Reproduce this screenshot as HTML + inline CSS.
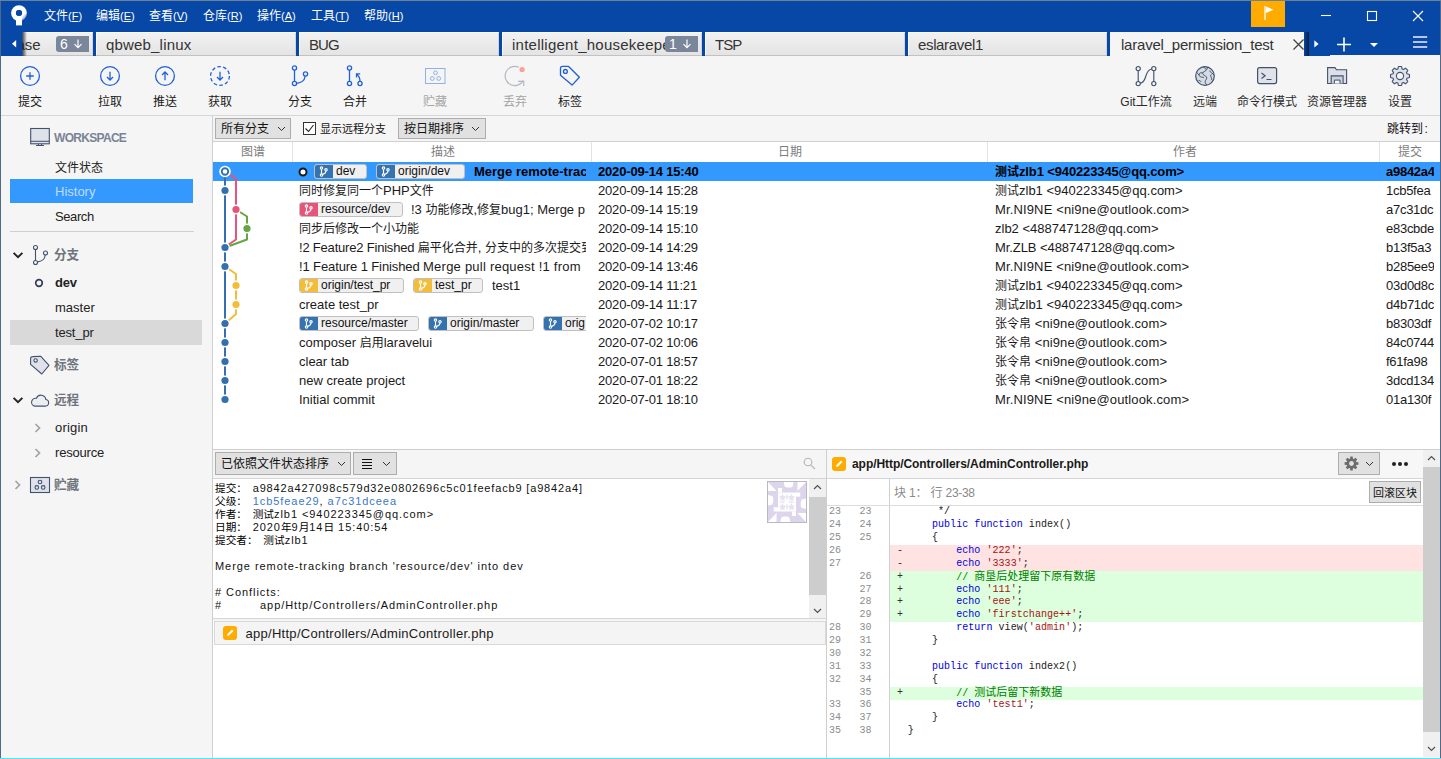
<!DOCTYPE html>
<html lang="zh-CN"><head><meta charset="utf-8"><title>Sourcetree</title>
<style>

*{box-sizing:border-box;margin:0;padding:0}
html,body{width:1441px;height:759px;overflow:hidden;background:#f5f5f5}
body{font-family:"Liberation Sans",sans-serif;font-size:12px;color:#1e1e1e}
#app{position:relative;width:1441px;height:759px;overflow:hidden;background:#f5f5f5}
svg{display:block;overflow:visible}
.cj{display:inline-block;vertical-align:baseline;white-space:nowrap;font-family:"Liberation Sans","Noto Sans CJK SC",sans-serif}
.t{position:absolute;white-space:nowrap;height:16px;line-height:16px}
.tc{text-align:center}
u{text-decoration:underline;text-underline-offset:1px}
/* title */
#title{position:absolute;left:0;top:0;width:1441px;height:32px;background:#0747a6}
.menu{color:#fff;font-size:11px}
.menu .cj{font-size:12px}
#logo{position:absolute;left:10px;top:4px}
#flag{position:absolute;left:1251px;top:1px;width:34px;height:26px;background:#ffab00}
#flag svg{position:absolute;left:12px;top:3.5px}
#winctl{position:absolute;left:1300px;top:0}
/* tabs */
#tabs{position:absolute;left:0;top:32px;width:1441px;height:24px;background:#0747a6}
.tab{position:absolute;top:0;height:24px;background:linear-gradient(#f2f2f2,#e4e4e4);overflow:hidden;border-bottom:1px solid #c2c2c2;box-shadow:inset 1px 1px 0 #f9f9f9,inset -1px 0 0 #d4d4d4}
.tab.act{background:#f5f5f5;border:none;box-shadow:none;overflow:visible}
.tl{position:absolute;top:2.8px;font-size:15px;line-height:20px;color:#333;white-space:nowrap}
.badge{position:absolute;top:4px;width:33px;height:16px;background:#7a869a;border-radius:3px 0 0 3px;color:#fff}
.badge .bn{position:absolute;left:4px;top:0;font-size:14px;line-height:16px}
.badge svg{position:absolute;left:17px;top:3px}
#tabshL{position:absolute;left:22px;top:0;width:5px;height:24px;background:linear-gradient(90deg,rgba(20,30,50,.85),rgba(20,30,50,0))}
#tabshR{position:absolute;left:1304px;top:0;width:5px;height:24px;background:linear-gradient(90deg,rgba(20,30,50,0),rgba(15,25,45,.9))}
#tabctl{position:absolute;left:0;top:0}
/* toolbar */
#toolbar{position:absolute;left:0;top:56px;width:1441px;height:60px;background:#f5f5f5;border-bottom:1px solid #d6d6d6}
.tbi{position:absolute;top:6px;width:28px;height:28px}
.tbl{font-size:12px;color:#1a1a1a}
.tbl.dis{color:#a5a5a5}
.tbl.r{color:#2b2b2b}
/* sidebar */
#side{position:absolute;left:1px;top:116px;width:212px;height:643px;background:#f5f5f5;border-right:1px solid #cfcfcf}
.sic{position:absolute}
.ws{font-size:12px;color:#7a8494;font-weight:bold;letter-spacing:-.7px}
.si{font-size:13px;color:#222}
.si .cj{font-size:12px}
.sh{font-size:12.6px;color:#6f747c}
.sel{position:absolute;background:#3399ff}
.hov{position:absolute;background:#d9d9d9}
.sep{position:absolute;height:1px;background:#cfcfcf}
/* filter */
#filter{position:absolute;left:213px;top:116px;width:1228px;height:25px;background:#f5f5f5}
.btn{position:absolute;background:#e1e1e1;border:1px solid #adadad}
.bt{font-size:12px;color:#111}
.chv{position:absolute}
.cb{position:absolute;width:13px;height:13px;background:#fff;border:1px solid #333}
/* commits */
#commits{position:absolute;left:213px;top:141px;width:1228px;height:308px;background:#fff;border-top:1px solid #d0d0d0;overflow:hidden}
#chead{position:absolute;left:0;top:0;width:1228px;height:20px}
.ch{color:#7d7d7d;font-size:12px}
.csep{position:absolute;top:0;width:1px;height:20px;background:#e3e3e3}
.row{position:absolute;left:0;width:1228px;height:19px}
.selrow{background:#3399ff}
.rt{font-size:13px;color:#1a1a1a}
.rt .cj{font-size:12px}
.hcell .rt{letter-spacing:-.27px}
.selrow .rt{color:#000}
.dcell{position:absolute;left:0;top:0;width:373px;height:19px;overflow:hidden}
.tag{position:absolute;top:2px;height:15px;border:1px solid #c0c0c0;border-radius:3px;background:#f0f0f0;overflow:hidden}
.ti{position:absolute;left:-1px;top:-1px;width:19px;height:15px;border-radius:3px 0 0 3px}
.ti svg{position:absolute;left:5px;top:2px}
.tx{position:absolute;left:21px;top:-1px;font-size:12px;line-height:15px;color:#111;white-space:nowrap}
.hcell{position:absolute;left:1173px;top:0;width:48px;height:19px;overflow:hidden}
.head{position:absolute;left:85px;top:5px}
#graph{position:absolute;left:0;top:0}
/* bottom-left */
#bl{position:absolute;left:213px;top:449px;width:613px;height:310px;background:#f5f5f5;border-top:1px solid #cfcfcf}
#info{position:absolute;left:0;top:28px;width:613px;height:141px;background:#fff;border-top:1px solid #d5d5d5;border-bottom:1px solid #d5d5d5;overflow:hidden}
.inf{font-size:11px;color:#111;letter-spacing:.94px;height:13px;line-height:13px}
.inf .cj{letter-spacing:0;font-size:10.67px;color:#000}
.lnk{color:#3a78c8}
.g1{display:inline-block;width:5.7px}
#avatar{position:absolute;left:554px;top:2px;width:40px;height:42px;border:1px solid #b9b9c4;background:#fff;overflow:hidden}
.vsb{position:absolute;width:17px;background:#f0f0f0}
.vsb .thumb{position:absolute;left:0;width:17px;background:#cdcdcd}
#files{position:absolute;left:0;top:171px;width:613px;height:139px;background:#fff}
.frow{position:absolute;left:1px;top:0;width:612px;height:24px;background:#f4f4f4;border:1px solid #d9d9d9}
.fic{position:absolute;left:8px;top:4px;width:14px;height:14px}
.ft{font-size:13px;color:#1a1a1a;letter-spacing:.28px}
/* bottom-right */
#br{position:absolute;left:826px;top:449px;width:615px;height:310px;background:#fff;border-top:1px solid #cfcfcf;border-left:1px solid #cfcfcf}
#brh{position:absolute;left:0;top:0;width:597px;height:29px;background:#f7f7f7;border-bottom:1px solid #d5d5d5}
.dots{position:absolute;left:565px;top:12px}
.dots i{display:inline-block;width:4px;height:4px;border-radius:2px;background:#222;margin-right:2px;vertical-align:top}
#diff{position:absolute;left:0;top:29px;width:597px;height:280px;background:#fff;overflow:hidden}
#gut{position:absolute;left:0;top:0;width:63px;height:280px;border-right:1px solid #d0d0d0}
#hunk{position:absolute;left:63px;top:0;width:534px;height:27px;border-bottom:1px solid #dcdcdc}
.hk{font-size:12px;color:#8a8a8a;letter-spacing:-.3px}
.dl{position:absolute;left:0;width:597px;height:13px;line-height:13px;font-family:"Liberation Mono",monospace;font-size:10px;letter-spacing:.055px;white-space:pre}
.dl .cj{letter-spacing:0;font-size:11px}
.dl.del::before,.dl.add::before{content:"";position:absolute;left:63px;top:0;right:0;bottom:0;z-index:0}
.dl.del::before{background:#ffe3e3}
.dl.add::before{background:#ddffdd}
.dl>span{position:absolute;top:0;z-index:1}
.n1{left:2px;color:#8c8c8c}.n2{left:32.5px;color:#8c8c8c}
.sg{left:70px;color:#333}
.cd{left:80.7px;color:#1a1a1a}
.k{color:#0000e0}.s{color:#a31515}.c{color:#008000}
/* window edges */
#edgeL{position:absolute;left:0;top:0;width:1px;height:759px;background:#50688a}
#edgeR{position:absolute;right:0;top:0;width:1px;height:759px;background:#50688a}
#edgeT{position:absolute;left:0;top:0;width:1441px;height:1px;background:#6d8196}
#edgeB{position:absolute;left:0;bottom:0;width:1441px;height:1px;background:#4fe6f5}

</style></head><body>
<div id="app">
<div id="title">
<div id="logo"><svg width="18" height="24" viewBox="0 0 18 24" ><defs><linearGradient id="lg" gradientUnits="userSpaceOnUse" x1="9" y1="11" x2="15.5" y2="17"><stop offset="0.35" stop-color="#fff"/><stop offset="1" stop-color="#3f6fc0"/></linearGradient></defs><path fill-rule="evenodd" fill="url(#lg)" d="M9 1.2a7.9 7.9 0 1 1 0 15.8a7.9 7.9 0 1 1 0-15.8zM9 6a3.1 3.1 0 1 0 0 6.2 3.1 3.1 0 0 0 0-6.2z"/><path fill="#fff" d="M6 11.5h6V21.4H6z"/><path fill="#0747a6" d="M9 6.1a3 3 0 1 0 0 6 3 3 0 0 0 0-6z"/></svg></div>
<div class="t menu" style="left:44px;top:8px;"><span class="cj" style="width:2em">文件</span>(<u>F</u>)</div>
<div class="t menu" style="left:96px;top:8px;"><span class="cj" style="width:2em">编辑</span>(<u>E</u>)</div>
<div class="t menu" style="left:149px;top:8px;"><span class="cj" style="width:2em">查看</span>(<u>V</u>)</div>
<div class="t menu" style="left:203px;top:8px;"><span class="cj" style="width:2em">仓库</span>(<u>R</u>)</div>
<div class="t menu" style="left:257px;top:8px;"><span class="cj" style="width:2em">操作</span>(<u>A</u>)</div>
<div class="t menu" style="left:311px;top:8px;"><span class="cj" style="width:2em">工具</span>(<u>T</u>)</div>
<div class="t menu" style="left:364px;top:8px;"><span class="cj" style="width:2em">帮助</span>(<u>H</u>)</div>
<div id="flag"><svg width="12" height="16" viewBox="0 0 12 16" ><path d="M2 1v14" stroke="#fff" stroke-width="1.3" fill="none"/><path d="M3 1.5l7.5 3.2L3 8z" fill="#fff"/></svg></div>
<div id="winctl"><svg width="141" height="32" viewBox="0 0 141 32" ><path d="M21 15.5h10" stroke="#fff" stroke-width="1.1"/><rect x="67.5" y="11.5" width="9" height="9" fill="none" stroke="#fff" stroke-width="1.1"/><path d="M113 11l10 10M123 11l-10 10" stroke="#fff" stroke-width="1.1"/></svg></div>
</div><div id="tabs">
<div class="tab" style="left:22px;width:71px">
<span class="tl" style="left:-5.5px">ase</span>
<span class="badge" style="left:34px"><span class="bn">6</span><svg width="10" height="10" viewBox="0 0 10 10" ><path d="M5 .5v8M1.5 5.2L5 8.7l3.5-3.5" stroke="#fff" stroke-width="1.2" fill="none"/></svg></span>
</div>
<div class="tab" style="left:96px;width:200px">
<span class="tl" style="left:10px;letter-spacing:.18px">qbweb_linux</span>
</div>
<div class="tab" style="left:299px;width:200px">
<span class="tl" style="left:10px;letter-spacing:-.9px">BUG</span>
</div>
<div class="tab" style="left:502px;width:200px">
<span class="tl" style="left:10px;letter-spacing:.25px">intelligent_housekeepe</span>
<span class="badge" style="left:163px"><span class="bn">1</span><svg width="10" height="10" viewBox="0 0 10 10" ><path d="M5 .5v8M1.5 5.2L5 8.7l3.5-3.5" stroke="#fff" stroke-width="1.2" fill="none"/></svg></span>
</div>
<div class="tab" style="left:705px;width:200px">
<span class="tl" style="left:10px;letter-spacing:-.9px">TSP</span>
</div>
<div class="tab" style="left:908px;width:199px">
<span class="tl" style="left:10px;letter-spacing:-.35px">eslaravel1</span>
</div>
<div class="tab act" style="left:1110px;width:194px"><span class="tl" style="left:11px;letter-spacing:-.22px">laravel_permission_test</span><div style="position:absolute;left:183px;top:7px"><svg width="11" height="11" viewBox="0 0 11 11" ><path d="M.5 .5l10 10M10.5 .5l-10 10" stroke="#444" stroke-width="1.3"/></svg></div></div>
<div id="tabshL"></div><div id="tabshR"></div>
<div id="tabctl"><svg width="1441" height="24" viewBox="0 0 1441 24" ><path d="M16.2 8v7.6L12 11.8z" fill="#fff"/><path d="M1314.3 8.3v7.2l4.3-3.6z" fill="#fff"/><path d="M1337 12.5h14M1344 5.5v14" stroke="#fff" stroke-width="1.6"/><path d="M1370 11h8l-4 4z" fill="#fff"/><path d="M1413 5h14.2M1413 10h14.2M1413 15h14.2" stroke="#b5c5e6" stroke-width="1.9"/><path d="M1330 23.5h111" stroke="#f5f5f5" stroke-width="1"/></svg></div>
</div><div id="toolbar">
<div class="tbi" style="left:16px"><svg width="28" height="28" viewBox="0 0 28 28" ><circle cx="14" cy="14" r="9.4" fill="none" stroke="#2161d8" stroke-width="1.3" /><path d="M14 10.2v7.6M10.2 14h7.6" stroke="#2161d8" stroke-width="1.3"/></svg></div>
<div class="t tc tbl " style="left:-15px;top:37.7px;width:90px;"><span class="cj" style="width:2em">提交</span></div>
<div class="tbi" style="left:96px"><svg width="28" height="28" viewBox="0 0 28 28" ><circle cx="14" cy="14" r="9.4" fill="none" stroke="#2161d8" stroke-width="1.3" /><path d="M14 9.8v8M11 15l3 3 3-3" stroke="#2161d8" stroke-width="1.3" fill="none"/></svg></div>
<div class="t tc tbl " style="left:65px;top:37.7px;width:90px;"><span class="cj" style="width:2em">拉取</span></div>
<div class="tbi" style="left:151px"><svg width="28" height="28" viewBox="0 0 28 28" ><circle cx="14" cy="14" r="9.4" fill="none" stroke="#2161d8" stroke-width="1.3" /><path d="M14 18.2v-8M11 13l3-3 3 3" stroke="#2161d8" stroke-width="1.3" fill="none"/></svg></div>
<div class="t tc tbl " style="left:120px;top:37.7px;width:90px;"><span class="cj" style="width:2em">推送</span></div>
<div class="tbi" style="left:206px"><svg width="28" height="28" viewBox="0 0 28 28" ><circle cx="14" cy="14" r="9.4" fill="none" stroke="#2161d8" stroke-width="1.3" stroke-dasharray="3.6 2.3"/><path d="M14 9.8v8M11 15l3 3 3-3" stroke="#2161d8" stroke-width="1.3" fill="none"/></svg></div>
<div class="t tc tbl " style="left:175px;top:37.7px;width:90px;"><span class="cj" style="width:2em">获取</span></div>
<div class="tbi" style="left:286px"><svg width="28" height="28" viewBox="0 0 28 28" ><g fill="none" stroke="#2161d8" stroke-width="1.3"><circle cx="8.5" cy="6" r="2.1"/><circle cx="8.5" cy="21.5" r="2.1"/><circle cx="19.5" cy="12" r="2.1"/><path d="M8.5 8.1v11.3M19.2 14.1c-.6 5-5 7-8.6 7.2"/></g></svg></div>
<div class="t tc tbl " style="left:255px;top:37.7px;width:90px;"><span class="cj" style="width:2em">分支</span></div>
<div class="tbi" style="left:341px"><svg width="28" height="28" viewBox="0 0 28 28" ><g fill="none" stroke="#2161d8" stroke-width="1.3"><circle cx="8.5" cy="6" r="2.1"/><circle cx="8.5" cy="21.5" r="2.1"/><circle cx="19" cy="21.5" r="2.1"/><path d="M8.5 8.1v11.3M19 19.4c0-3.5-1-5.5-3-7M15.5 15.5v-3.7h3.7"/></g></svg></div>
<div class="t tc tbl " style="left:310px;top:37.7px;width:90px;"><span class="cj" style="width:2em">合并</span></div>
<div class="tbi" style="left:421px"><svg width="28" height="28" viewBox="0 0 28 28" ><g fill="none" stroke="#8fb0ea" stroke-width="1"><rect x="4.5" y="6.5" width="19.5" height="15"/><circle cx="14.5" cy="10.8" r="1.9"/><circle cx="11.3" cy="16.5" r="1.9"/><circle cx="17.7" cy="16.5" r="1.9"/></g></svg></div>
<div class="t tc tbl dis" style="left:390px;top:37.7px;width:90px;"><span class="cj" style="width:2em">贮藏</span></div>
<div class="tbi" style="left:501px"><svg width="28" height="28" viewBox="0 0 28 28" ><path d="M17.9 5.3A9.6 9.6 0 1 0 22.3 18.4" fill="none" stroke="#b3b8c3" stroke-width="1.2"/><path d="M17 19.4h5.7V24" fill="none" stroke="#b3b8c3" stroke-width="1.2"/><circle cx="21.1" cy="7.5" r="2.6" fill="#f6a394"/></svg></div>
<div class="t tc tbl dis" style="left:470px;top:37.7px;width:90px;"><span class="cj" style="width:2em">丢弃</span></div>
<div class="tbi" style="left:556px"><svg width="28" height="28" viewBox="0 0 28 28" ><g fill="none" stroke="#2161d8" stroke-width="1.35" stroke-linejoin="round"><path d="M4.5 6.3Q4.5 4.4 6.4 4.4H12.6L23.4 15.3 16.1 23.1 4.5 13.2z"/><circle cx="9.4" cy="9.4" r="1.9"/></g></svg></div>
<div class="t tc tbl " style="left:525px;top:37.7px;width:90px;"><span class="cj" style="width:2em">标签</span></div>
<div class="tbi" style="left:1132px"><svg width="28" height="28" viewBox="0 0 28 28" ><g fill="none" stroke="#42526e" stroke-width="1.15"><circle cx="6.2" cy="6.6" r="2.1"/><circle cx="6.2" cy="21.6" r="2.1"/><circle cx="21.8" cy="6.6" r="2.1"/><circle cx="21.8" cy="21.6" r="2.1"/><path d="M6.2 8.7v10.8M21.8 8.7v10.8M8.3 21.2C12.4 20.4 12.8 17 13.8 14.2S15.4 7.8 19.7 7"/></g></svg></div>
<div class="t tc tbl r" style="left:1101px;top:37.7px;width:90px;">Git<span class="cj" style="width:3em">工作流</span></div>
<div class="tbi" style="left:1191px"><svg width="28" height="28" viewBox="0 0 28 28" ><circle cx="14" cy="14" r="9.3" fill="#d6dae3" stroke="#42526e" stroke-width="1.2"/><path d="M12.2 5c1.6 1 3.2 1.2 3 2.8-.2 1.5-2.4 1.5-3.2 2.8-.9 1.5.6 2.3 1.8 3 1.5.9 2.3 1.7 1.7 3.3-.5 1.3-1.6 1.8-1.3 3.4.2 1.1 1 1.9 1.6 2.8M15.2 7.8c1-.4 1.4-1.5 1.2-2.6M11.9 10.7c-1.3.3-2.5-.2-3.4.8-.9 1.1-.4 2.6.8 3.200 1.200.6 2.800.2 3.700 1.200M19 8.600c-.2 1.300.8 1.800 1.800 2.400.9.5 1.900 1.100 2.200 2.300M20.300 12.400c-.9.900-.7 2.100 0 3 .6.800.5 1.800-.2 2.700M6 10.700c.8 1 1.900 1.300 2.300 2.500M7.600 18.600c1-.2 1.900.3 2.500 1.200" fill="none" stroke="#42526e" stroke-width="1"/></svg></div>
<div class="t tc tbl r" style="left:1160px;top:37.7px;width:90px;"><span class="cj" style="width:2em">远端</span></div>
<div class="tbi" style="left:1253px"><svg width="28" height="28" viewBox="0 0 28 28" ><rect x="4.6" y="5.6" width="19" height="16" rx="2" fill="#dfe2e8" stroke="#42526e" stroke-width="1.2"/><path d="M8.5 11l3.6 2.7-3.6 2.7M13.5 17.5h5" fill="none" stroke="#42526e" stroke-width="1.2"/></svg></div>
<div class="t tc tbl r" style="left:1222px;top:37.7px;width:90px;"><span class="cj" style="width:5em">命令行模式</span></div>
<div class="tbi" style="left:1323px"><svg width="28" height="28" viewBox="0 0 28 28" ><path d="M4.6 21.5V5.6h7.4l1.4 2.2h10.2v13.7z" fill="#dde0e8" stroke="#42526e" stroke-width="1.1"/><path d="M8.2 21.5v-7.6h11.9v7.6" fill="#cdd1db" stroke="#42526e" stroke-width="1.1"/><path d="M11.4 21.4v-3.3h5.6v3.3" fill="#f5f5f5" stroke="#42526e" stroke-width="1"/></svg></div>
<div class="t tc tbl r" style="left:1292px;top:37.7px;width:90px;"><span class="cj" style="width:5em">资源管理器</span></div>
<div class="tbi" style="left:1386px"><svg width="28" height="28" viewBox="0 0 28 28" ><path d="M12.42 4.53L15.58 4.53L16.17 7.03L17.39 7.54L19.58 6.19L21.81 8.42L20.46 10.61L20.97 11.83L23.47 12.42L23.47 15.58L20.97 16.17L20.46 17.39L21.81 19.58L19.58 21.81L17.39 20.46L16.17 20.97L15.58 23.47L12.42 23.47L11.83 20.97L10.61 20.46L8.42 21.81L6.19 19.58L7.54 17.39L7.03 16.17L4.53 15.58L4.53 12.42L7.03 11.83L7.54 10.61L6.19 8.42L8.42 6.19L10.61 7.54L11.83 7.03Z" fill="#dfe2e9" stroke="#42526e" stroke-width="1.1" stroke-linejoin="round"/><circle cx="14" cy="14" r="3.6" fill="#f5f5f5" stroke="#42526e" stroke-width="1.1"/></svg></div>
<div class="t tc tbl r" style="left:1355px;top:37.7px;width:90px;"><span class="cj" style="width:2em">设置</span></div>
</div><div id="side">
<div class="sic" style="left:28px;top:10px"><svg width="22" height="22" viewBox="0 0 22 22" ><rect x="1.7" y="2.5" width="18.6" height="15.300" fill="#dfe2e8" stroke="#42526e" stroke-width="1.1"/><path d="M1.7 15.300h18.600M9.400 17.800v1.600M12.600 17.800v1.600M7 19.500h8" stroke="#42526e" stroke-width="1" fill="none"/></svg></div>
<div class="t ws" style="left:53px;top:13.5px;">WORKSPACE</div>
<div class="t si" style="left:54px;top:43.7px;"><span class="cj" style="width:4em">文件状态</span></div>
<div class="sel" style="left:9px;top:63px;width:183px;height:24px"></div>
<div class="t si" style="left:54px;top:67.5px;color:#c3daff">History</div>
<div class="t si" style="left:54px;top:92.5px;letter-spacing:-.4px">Search</div>
<div class="sep" style="left:9px;top:115px;width:184px"></div>
<div class="sic" style="left:11px;top:133px"><svg width="12" height="12" viewBox="0 0 12 12" ><path d="M1.6 3.8l4.4 4.4 4.400-4.400" fill="none" stroke="#222" stroke-width="1.9"/></svg></div>
<div class="sic" style="left:29px;top:128px"><svg width="22" height="22" viewBox="0 0 22 22" ><g fill="none" stroke="#42526e" stroke-width="1.1"><circle cx="5.5" cy="3.5" r="2"/><circle cx="5.5" cy="18.5" r="2"/><circle cx="15.5" cy="9" r="2"/><path d="M5.5 5.5v11M15.3 11c-.5 4.500-4.500 6.500-7.800 6.900"/></g></svg></div>
<div class="t sh" style="left:53px;top:130.5px;"><span class="cj" style="width:2em;font-weight:bold">分支</span></div>
<div class="sic" style="left:33px;top:162px"><svg width="10" height="10" viewBox="0 0 10 10" ><circle cx="5" cy="5" r="3.3" fill="none" stroke="#333f57" stroke-width="1.7"/></svg></div>
<div class="t si" style="left:54px;top:159px;letter-spacing:-.2px"><b>dev</b></div>
<div class="t si" style="left:54px;top:184px;">master</div>
<div class="hov" style="left:9px;top:204px;width:192px;height:25px"></div>
<div class="t si" style="left:54px;top:209px;letter-spacing:-.16px">test_pr</div>
<div class="sic" style="left:28px;top:238px"><svg width="22" height="22" viewBox="0 0 22 22" ><g fill="#dfe2ea" stroke="#42526e" stroke-width="1.1" stroke-linejoin="round"><path d="M1.6 4.6Q1.6 2.6 3.6 2.6L11.6 2.2 20 11.4 12.8 20 1.6 10.4z"/><circle cx="6.6" cy="6.4" r="1.7" fill="#f5f5f5"/></g></svg></div>
<div class="t sh" style="left:53px;top:240.5px;"><span class="cj" style="width:2em;font-weight:bold">标签</span></div>
<div class="sic" style="left:11px;top:278px"><svg width="12" height="12" viewBox="0 0 12 12" ><path d="M1.6 3.8l4.4 4.4 4.400-4.400" fill="none" stroke="#222" stroke-width="1.9"/></svg></div>
<div class="sic" style="left:29px;top:276px"><svg width="20" height="16.4" viewBox="0 0 22 18" ><path d="M5.2 15.5h11.6a3.7 3.7 0 0 0 .6-7.35 5.4 5.4 0 0 0-10.4-1.2A4.3 4.3 0 0 0 5.2 15.5z" fill="#eceef2" stroke="#42526e" stroke-width="1.2"/></svg></div>
<div class="t sh" style="left:53px;top:275.5px;"><span class="cj" style="width:2em;font-weight:bold">远程</span></div>
<div class="sic" style="left:30.5px;top:306px"><svg width="12" height="12" viewBox="0 0 12 12" ><path d="M3.5 2l4 4-4 4" fill="none" stroke="#a3a3a3" stroke-width="1.7"/></svg></div>
<div class="t si" style="left:54px;top:304px;letter-spacing:.2px">origin</div>
<div class="sic" style="left:30.5px;top:331px"><svg width="12" height="12" viewBox="0 0 12 12" ><path d="M3.5 2l4 4-4 4" fill="none" stroke="#a3a3a3" stroke-width="1.7"/></svg></div>
<div class="t si" style="left:54px;top:329px;letter-spacing:-.2px">resource</div>
<div class="sic" style="left:11px;top:363px"><svg width="12" height="12" viewBox="0 0 12 12" ><path d="M3.5 2l4 4-4 4" fill="none" stroke="#a3a3a3" stroke-width="1.7"/></svg></div>
<div class="sic" style="left:28px;top:360px"><svg width="22" height="18" viewBox="0 0 22 18" ><g fill="#dfe2ea" stroke="#42526e" stroke-width="1.1"><rect x="1.5" y="1.5" width="19" height="15"/><circle cx="11" cy="6" r="1.8"/><circle cx="7.8" cy="11.4" r="1.8"/><circle cx="14.2" cy="11.4" r="1.8"/></g></svg></div>
<div class="t sh" style="left:53px;top:361px;"><span class="cj" style="width:2em;font-weight:bold">贮藏</span></div>
</div><div id="filter">
<div class="btn" style="left:2px;top:2px;width:76px;height:21px"><div class="t bt" style="left:5px;top:1.5px;"><span class="cj" style="width:4em">所有分支</span></div><div class="chv" style="left:61px;top:7px"><svg width="9" height="6" viewBox="0 0 9 6" ><path d="M1 1l3.5 3.5L8 1" fill="none" stroke="#333" stroke-width="1"/></svg></div></div>
<div class="cb" style="left:90px;top:6px"><svg width="11" height="11" viewBox="0 0 11 11" ><path d="M1.5 5.5l3 3 5-6.5" fill="none" stroke="#222" stroke-width="1.1"/></svg></div>
<div class="t bt" style="left:107px;top:4.5px;font-size:11px"><span class="cj" style="width:6em">显示远程分支</span></div>
<div class="btn" style="left:185px;top:2px;width:88px;height:21px"><div class="t bt" style="left:5px;top:1.5px;"><span class="cj" style="width:5em">按日期排序</span></div><div class="chv" style="left:72px;top:7px"><svg width="9" height="6" viewBox="0 0 9 6" ><path d="M1 1l3.5 3.5L8 1" fill="none" stroke="#333" stroke-width="1"/></svg></div></div>
<div class="t bt" style="left:1174px;top:5.2px;"><span class="cj" style="width:3em">跳转到</span><span style="margin-left:1.5px">:</span></div>
</div><div id="commits">
<div id="chead">
<div class="t tc ch" style="left:10px;top:1.5px;width:60px;"><span class="cj" style="width:2em">图谱</span></div>
<div class="t tc ch" style="left:200px;top:1.5px;width:60px;"><span class="cj" style="width:2em">描述</span></div>
<div class="t tc ch" style="left:547px;top:1.5px;width:60px;"><span class="cj" style="width:2em">日期</span></div>
<div class="t tc ch" style="left:942px;top:1.5px;width:60px;"><span class="cj" style="width:2em">作者</span></div>
<div class="t tc ch" style="left:1167px;top:1.5px;width:60px;"><span class="cj" style="width:2em">提交</span></div>
<div class="csep" style="left:79px"></div>
<div class="csep" style="left:378px"></div>
<div class="csep" style="left:774px"></div>
<div class="csep" style="left:1166px"></div>
</div>
<div class="row selrow" style="top:20px">
<div class="dcell">
<div class="head"><svg width="10" height="10" viewBox="0 0 10 10" ><circle cx="5" cy="5" r="3.5" fill="#fff" stroke="#1a1a1a" stroke-width="2"/></svg></div>
<div class="tag" style="left:101px;width:53px"><span class="ti" style="background:#3572b0"><svg width="9" height="11" viewBox="0 0 9 11" ><g fill="none" stroke="#fff" stroke-width="1.15"><circle cx="2.5" cy="2" r="1.2"/><circle cx="2.5" cy="9" r="1.2"/><circle cx="7" cy="3.8" r="1.2"/><path d="M2.5 3.2v4.6M7 5c-.2 2.2-2 3-3.4 3.4"/></g></svg></span><span class="tx">dev</span></div>
<div class="tag" style="left:163px;width:89px"><span class="ti" style="background:#3572b0"><svg width="9" height="11" viewBox="0 0 9 11" ><g fill="none" stroke="#fff" stroke-width="1.15"><circle cx="2.5" cy="2" r="1.2"/><circle cx="2.5" cy="9" r="1.2"/><circle cx="7" cy="3.8" r="1.2"/><path d="M2.5 3.2v4.6M7 5c-.2 2.2-2 3-3.4 3.4"/></g></svg></span><span class="tx">origin/dev</span></div>
<div class="t rt" style="left:261px;top:1.5px;"><b>Merge remote-trac</b></div>
</div>
<div class="t rt" style="left:385px;top:1.5px;letter-spacing:-.17px"><b>2020-09-14 15:40</b></div>
<div class="t rt" style="left:782px;top:1.5px;"><b><span class="cj" style="width:2em">测试</span><span style="letter-spacing:-.13px">zlb1 &lt;940223345@qq.com&gt;</span></b></div>
<div class="hcell"><div class="t rt" style="left:0px;top:1.5px;"><b>a9842a4</b></div></div>
</div>
<div class="row" style="top:39px">
<div class="dcell">
<div class="t rt" style="left:86px;top:1.5px;"><span class="cj" style="width:7em">同时修复同一个</span>PHP<span class="cj" style="width:2em">文件</span></div>
</div>
<div class="t rt" style="left:385px;top:1.5px;letter-spacing:-.17px">2020-09-14 15:28</div>
<div class="t rt" style="left:782px;top:1.5px;"><span class="cj" style="width:2em">测试</span><span style="letter-spacing:0">zlb1 &lt;940223345@qq.com&gt;</span></div>
<div class="hcell"><div class="t rt" style="left:0px;top:1.5px;">1cb5fea</div></div>
</div>
<div class="row" style="top:58px">
<div class="dcell">
<div class="tag" style="left:86px;width:104px"><span class="ti" style="background:#e8537a"><svg width="9" height="11" viewBox="0 0 9 11" ><g fill="none" stroke="#fff" stroke-width="1.15"><circle cx="2.5" cy="2" r="1.2"/><circle cx="2.5" cy="9" r="1.2"/><circle cx="7" cy="3.8" r="1.2"/><path d="M2.5 3.2v4.6M7 5c-.2 2.2-2 3-3.4 3.4"/></g></svg></span><span class="tx">resource/dev</span></div>
<div class="t rt" style="left:198px;top:1.5px;">!3 <span class="cj" style="width:4em">功能修改</span>,<span class="cj" style="width:2em">修复</span>bug1; Merge p</div>
</div>
<div class="t rt" style="left:385px;top:1.5px;letter-spacing:-.17px">2020-09-14 15:19</div>
<div class="t rt" style="left:782px;top:1.5px;"><span style="letter-spacing:.14px">Mr.NI9NE &lt;ni9ne@outlook.com&gt;</span></div>
<div class="hcell"><div class="t rt" style="left:0px;top:1.5px;">a7c31dc</div></div>
</div>
<div class="row" style="top:77px">
<div class="dcell">
<div class="t rt" style="left:86px;top:1.5px;"><span class="cj" style="width:10em">同步后修改一个小功能</span></div>
</div>
<div class="t rt" style="left:385px;top:1.5px;letter-spacing:-.17px">2020-09-14 15:10</div>
<div class="t rt" style="left:782px;top:1.5px;"><span style="letter-spacing:0">zlb2 &lt;488747128@qq.com&gt;</span></div>
<div class="hcell"><div class="t rt" style="left:0px;top:1.5px;">e83cbde</div></div>
</div>
<div class="row" style="top:96px">
<div class="dcell">
<div class="t rt" style="left:86px;top:1.5px;"><span style="letter-spacing:-.2px">!2 Feature2 Finished </span><span class="cj" style="width:5em">扁平化合并</span>, <span class="cj" style="width:9em">分支中的多次提交到</span></div>
</div>
<div class="t rt" style="left:385px;top:1.5px;letter-spacing:-.17px">2020-09-14 14:29</div>
<div class="t rt" style="left:782px;top:1.5px;"><span style="letter-spacing:-.07px">Mr.ZLB &lt;488747128@qq.com&gt;</span></div>
<div class="hcell"><div class="t rt" style="left:0px;top:1.5px;">b13f5a3</div></div>
</div>
<div class="row" style="top:115px">
<div class="dcell">
<div class="t rt" style="left:86px;top:1.5px;"><span style="letter-spacing:-.11px">!1 Feature 1 Finished </span><span style="letter-spacing:.23px">Merge pull request !1 from</span></div>
</div>
<div class="t rt" style="left:385px;top:1.5px;letter-spacing:-.17px">2020-09-14 13:46</div>
<div class="t rt" style="left:782px;top:1.5px;"><span style="letter-spacing:.14px">Mr.NI9NE &lt;ni9ne@outlook.com&gt;</span></div>
<div class="hcell"><div class="t rt" style="left:0px;top:1.5px;">b285ee9</div></div>
</div>
<div class="row" style="top:134px">
<div class="dcell">
<div class="tag" style="left:86px;width:105px"><span class="ti" style="background:#f3bd3a"><svg width="9" height="11" viewBox="0 0 9 11" ><g fill="none" stroke="#fff" stroke-width="1.15"><circle cx="2.5" cy="2" r="1.2"/><circle cx="2.5" cy="9" r="1.2"/><circle cx="7" cy="3.8" r="1.2"/><path d="M2.5 3.2v4.6M7 5c-.2 2.2-2 3-3.4 3.4"/></g></svg></span><span class="tx">origin/test_pr</span></div>
<div class="tag" style="left:200px;width:70px"><span class="ti" style="background:#f3bd3a"><svg width="9" height="11" viewBox="0 0 9 11" ><g fill="none" stroke="#fff" stroke-width="1.15"><circle cx="2.5" cy="2" r="1.2"/><circle cx="2.5" cy="9" r="1.2"/><circle cx="7" cy="3.8" r="1.2"/><path d="M2.5 3.2v4.6M7 5c-.2 2.2-2 3-3.4 3.4"/></g></svg></span><span class="tx">test_pr</span></div>
<div class="t rt" style="left:279px;top:1.5px;">test1</div>
</div>
<div class="t rt" style="left:385px;top:1.5px;letter-spacing:-.17px">2020-09-14 11:21</div>
<div class="t rt" style="left:782px;top:1.5px;"><span class="cj" style="width:2em">测试</span><span style="letter-spacing:0">zlb1 &lt;940223345@qq.com&gt;</span></div>
<div class="hcell"><div class="t rt" style="left:0px;top:1.5px;">03d0d8c</div></div>
</div>
<div class="row" style="top:153px">
<div class="dcell">
<div class="t rt" style="left:86px;top:1.5px;">create test_pr</div>
</div>
<div class="t rt" style="left:385px;top:1.5px;letter-spacing:-.17px">2020-09-14 11:17</div>
<div class="t rt" style="left:782px;top:1.5px;"><span class="cj" style="width:2em">测试</span><span style="letter-spacing:0">zlb1 &lt;940223345@qq.com&gt;</span></div>
<div class="hcell"><div class="t rt" style="left:0px;top:1.5px;">d4b71dc</div></div>
</div>
<div class="row" style="top:172px">
<div class="dcell">
<div class="tag" style="left:86px;width:120px"><span class="ti" style="background:#3572b0"><svg width="9" height="11" viewBox="0 0 9 11" ><g fill="none" stroke="#fff" stroke-width="1.15"><circle cx="2.5" cy="2" r="1.2"/><circle cx="2.5" cy="9" r="1.2"/><circle cx="7" cy="3.8" r="1.2"/><path d="M2.5 3.2v4.6M7 5c-.2 2.2-2 3-3.4 3.4"/></g></svg></span><span class="tx">resource/master</span></div>
<div class="tag" style="left:215px;width:106px"><span class="ti" style="background:#3572b0"><svg width="9" height="11" viewBox="0 0 9 11" ><g fill="none" stroke="#fff" stroke-width="1.15"><circle cx="2.5" cy="2" r="1.2"/><circle cx="2.5" cy="9" r="1.2"/><circle cx="7" cy="3.8" r="1.2"/><path d="M2.5 3.2v4.6M7 5c-.2 2.2-2 3-3.4 3.4"/></g></svg></span><span class="tx">origin/master</span></div>
<div class="tag" style="left:330px;width:80px"><span class="ti" style="background:#3572b0"><svg width="9" height="11" viewBox="0 0 9 11" ><g fill="none" stroke="#fff" stroke-width="1.15"><circle cx="2.5" cy="2" r="1.2"/><circle cx="2.5" cy="9" r="1.2"/><circle cx="7" cy="3.8" r="1.2"/><path d="M2.5 3.2v4.6M7 5c-.2 2.2-2 3-3.4 3.4"/></g></svg></span><span class="tx">orig</span></div>
</div>
<div class="t rt" style="left:385px;top:1.5px;letter-spacing:-.17px">2020-07-02 10:17</div>
<div class="t rt" style="left:782px;top:1.5px;"><span class="cj" style="width:3em">张令帛</span><span style="letter-spacing:.11px"> &lt;ni9ne@outlook.com&gt;</span></div>
<div class="hcell"><div class="t rt" style="left:0px;top:1.5px;">b8303df</div></div>
</div>
<div class="row" style="top:191px">
<div class="dcell">
<div class="t rt" style="left:86px;top:1.5px;">composer <span class="cj" style="width:2em">启用</span>laravelui</div>
</div>
<div class="t rt" style="left:385px;top:1.5px;letter-spacing:-.17px">2020-07-02 10:06</div>
<div class="t rt" style="left:782px;top:1.5px;"><span class="cj" style="width:3em">张令帛</span><span style="letter-spacing:.11px"> &lt;ni9ne@outlook.com&gt;</span></div>
<div class="hcell"><div class="t rt" style="left:0px;top:1.5px;">84c0744</div></div>
</div>
<div class="row" style="top:210px">
<div class="dcell">
<div class="t rt" style="left:86px;top:1.5px;">clear tab</div>
</div>
<div class="t rt" style="left:385px;top:1.5px;letter-spacing:-.17px">2020-07-01 18:57</div>
<div class="t rt" style="left:782px;top:1.5px;"><span class="cj" style="width:3em">张令帛</span><span style="letter-spacing:.11px"> &lt;ni9ne@outlook.com&gt;</span></div>
<div class="hcell"><div class="t rt" style="left:0px;top:1.5px;">f61fa98</div></div>
</div>
<div class="row" style="top:229px">
<div class="dcell">
<div class="t rt" style="left:86px;top:1.5px;">new create project</div>
</div>
<div class="t rt" style="left:385px;top:1.5px;letter-spacing:-.17px">2020-07-01 18:22</div>
<div class="t rt" style="left:782px;top:1.5px;"><span class="cj" style="width:3em">张令帛</span><span style="letter-spacing:.11px"> &lt;ni9ne@outlook.com&gt;</span></div>
<div class="hcell"><div class="t rt" style="left:0px;top:1.5px;">3dcd134</div></div>
</div>
<div class="row" style="top:248px">
<div class="dcell">
<div class="t rt" style="left:86px;top:1.5px;">Initial commit</div>
</div>
<div class="t rt" style="left:385px;top:1.5px;letter-spacing:-.17px">2020-07-01 18:10</div>
<div class="t rt" style="left:782px;top:1.5px;"><span style="letter-spacing:.14px">Mr.NI9NE &lt;ni9ne@outlook.com&gt;</span></div>
<div class="hcell"><div class="t rt" style="left:0px;top:1.5px;">01a130f</div></div>
</div>
<div id="graph"><svg width="80" height="300" viewBox="0 0 80 300" ><g fill="none" stroke-width="2" stroke-linejoin="round"><path d="M12 34.5V257.5" stroke="#3470b0"/><path d="M16 32L23 37V97.5L15 103" stroke="#e8537a"/><path d="M23 67.5L34 74.5V97.5L15 104.5" stroke="#62a744"/><path d="M12 124.5L23 132V172L15 179" stroke="#f3bd3a"/></g><circle cx="12" cy="29.5" r="5.8" fill="#fff"/><circle cx="12" cy="29.5" r="3.2" fill="#fff" stroke="#3470b0" stroke-width="1.9"/><circle cx="12" cy="48.5" r="4.9" fill="#fff"/><circle cx="12" cy="48.5" r="3.6" fill="#3470b0"/><circle cx="23" cy="67.5" r="4.9" fill="#fff"/><circle cx="23" cy="67.5" r="3.6" fill="#e8537a"/><circle cx="34" cy="86.5" r="4.9" fill="#fff"/><circle cx="34" cy="86.5" r="3.6" fill="#62a744"/><circle cx="12" cy="105.5" r="4.9" fill="#fff"/><circle cx="12" cy="105.5" r="3.6" fill="#3470b0"/><circle cx="12" cy="124.5" r="4.9" fill="#fff"/><circle cx="12" cy="124.5" r="3.6" fill="#3470b0"/><circle cx="23" cy="143.5" r="4.9" fill="#fff"/><circle cx="23" cy="143.5" r="3.6" fill="#f3bd3a"/><circle cx="23" cy="162.5" r="4.9" fill="#fff"/><circle cx="23" cy="162.5" r="3.6" fill="#f3bd3a"/><circle cx="12" cy="181.5" r="4.9" fill="#fff"/><circle cx="12" cy="181.5" r="3.6" fill="#3470b0"/><circle cx="12" cy="200.5" r="4.9" fill="#fff"/><circle cx="12" cy="200.5" r="3.6" fill="#3470b0"/><circle cx="12" cy="219.5" r="4.9" fill="#fff"/><circle cx="12" cy="219.5" r="3.6" fill="#3470b0"/><circle cx="12" cy="238.5" r="4.9" fill="#fff"/><circle cx="12" cy="238.5" r="3.6" fill="#3470b0"/><circle cx="12" cy="257.5" r="4.9" fill="#fff"/><circle cx="12" cy="257.5" r="3.6" fill="#3470b0"/></svg></div>
</div><div id="bl">
<div class="btn" style="left:2px;top:2px;width:136px;height:23px"><div class="t bt" style="left:5px;top:2.5px;"><span class="cj" style="width:9em">已依照文件状态排序</span></div><div class="chv" style="left:121px;top:8px"><svg width="9" height="6" viewBox="0 0 9 6" ><path d="M1 1l3.5 3.5L8 1" fill="none" stroke="#333" stroke-width="1"/></svg></div></div>
<div class="btn" style="left:140px;top:2px;width:44px;height:23px"><div class="chv" style="left:7px;top:5px"><svg width="12" height="12" viewBox="0 0 12 12" ><path d="M1 1.500h10M1 4.500h10M1 7.500h10M1 10.500h10" stroke="#111" stroke-width="1" shape-rendering="crispEdges"/></svg></div><div class="chv" style="left:28px;top:8px"><svg width="9" height="6" viewBox="0 0 9 6" ><path d="M1 1l3.5 3.5L8 1" fill="none" stroke="#333" stroke-width="1"/></svg></div></div>
<div class="chv" style="left:590px;top:7px"><svg width="13" height="13" viewBox="0 0 13 13" ><circle cx="5" cy="5" r="3.8" fill="none" stroke="#b4b4b4" stroke-width="1.1"/><path d="M7.8 7.8L12 12" stroke="#b4b4b4" stroke-width="1.1"/></svg></div>
<div id="info">
<div class="t inf" style="left:2px;top:2.9px;letter-spacing:.84px"><span class="cj" style="width:3em">提交：</span><span class="g1"></span>a9842a427098c579d32e0802696c5c01feefacb9 [a9842a4]</div>
<div class="t inf" style="left:2px;top:15.9px;"><span class="cj" style="width:3em">父级：</span><span class="g1"></span><span class="lnk">1cb5feae29</span>, <span class="lnk">a7c31dceea</span></div>
<div class="t inf" style="left:2px;top:28.9px;"><span class="cj" style="width:3em">作者：</span><span class="g1"></span><span class="cj" style="width:2em">测试</span>zlb1 &lt;940223345@qq.com&gt;</div>
<div class="t inf" style="left:2px;top:41.9px;"><span class="cj" style="width:3em">日期：</span><span class="g1"></span>2020<span class="cj" style="width:1em">年</span>9<span class="cj" style="width:1em">月</span>14<span class="cj" style="width:1em">日</span> 15:40:54</div>
<div class="t inf" style="left:2px;top:54.9px;"><span class="cj" style="width:4em">提交者：</span><span class="g1"></span><span class="cj" style="width:2em">测试</span>zlb1</div>
<div class="t inf" style="left:2px;top:80.9px;">Merge remote-tracking branch 'resource/dev' into dev</div>
<div class="t inf" style="left:2px;top:106.9px;"># Conflicts:</div>
<div class="t inf" style="left:2px;top:119.9px;">#<span style="display:inline-block;width:38px"></span>app/Http/Controllers/AdminController.php</div>
<div id="avatar"><svg width="38" height="40" viewBox="0 0 40 40" preserveAspectRatio="none"><rect width="40" height="40" fill="#fff"/><g transform="rotate(0 20 20)"><path d="M0 0H16.5L17.5 4.5 20 5.6H24L26 4.5 27 0H31V10.5H10.5Z" fill="#dcd5ec"/><path d="M10.5 6h4.2v4.5h-4.2z" fill="#fff"/></g><g transform="rotate(90 20 20)"><path d="M0 0H16.5L17.5 4.5 20 5.6H24L26 4.5 27 0H31V10.5H10.5Z" fill="#dcd5ec"/><path d="M10.5 6h4.2v4.5h-4.2z" fill="#fff"/></g><g transform="rotate(180 20 20)"><path d="M0 0H16.5L17.5 4.5 20 5.6H24L26 4.5 27 0H31V10.5H10.5Z" fill="#dcd5ec"/><path d="M10.5 6h4.2v4.5h-4.2z" fill="#fff"/></g><g transform="rotate(270 20 20)"><path d="M0 0H16.5L17.5 4.5 20 5.6H24L26 4.5 27 0H31V10.5H10.5Z" fill="#dcd5ec"/><path d="M10.5 6h4.2v4.5h-4.2z" fill="#fff"/></g><path d="M15.3 11.9l1.3 2.2 2.4.5-1.700 1.700.3 2.5-2.300-1-2.300 1 .3-2.500-1.700-1.700 2.400-.500z" fill="#dcd5ec" opacity=".7"/><path d="M24.7 11.9l1.3 2.2 2.4.5-1.700 1.700.3 2.5-2.300-1-2.300 1 .3-2.500-1.700-1.700 2.400-.500z" fill="#dcd5ec" opacity=".7"/><path d="M15.3 21.3l1.3 2.2 2.4.5-1.700 1.700.3 2.5-2.300-1-2.300 1 .3-2.500-1.700-1.700 2.400-.500z" fill="#dcd5ec" opacity=".7"/><path d="M24.7 21.3l1.3 2.2 2.4.5-1.700 1.700.3 2.5-2.300-1-2.300 1 .3-2.500-1.700-1.700 2.400-.500z" fill="#dcd5ec" opacity=".7"/><path d="M20 11.5l1.6 4-1.6 3-1.6-3zM20 28.5l1.6-4-1.6-3-1.6 3zM11.5 20l4-1.6 3 1.6-3 1.6zM28.5 20l-4-1.6-3 1.6 3 1.6z" fill="#dcd5ec" opacity=".55"/></svg></div>
<div class="vsb" style="right:0;top:0;height:140px"><div style="position:absolute;left:0;top:0"><svg width="17" height="17" viewBox="0 0 17 17" ><path d="M5 10l3.5-3.5L12 10" fill="none" stroke="#505050" stroke-width="1.2"/></svg></div><div class="thumb" style="top:17.5px;height:98px"></div><div style="position:absolute;left:0;bottom:0"><svg width="17" height="17" viewBox="0 0 17 17" ><path d="M5 7l3.5 3.5L12 7" fill="none" stroke="#505050" stroke-width="1.2"/></svg></div></div>
</div>
<div id="files"><div class="frow"><div class="fic"><svg width="14" height="14" viewBox="0 0 14 14" ><rect width="14" height="14" rx="3" fill="#ffab00"/><path d="M4 10l.5-2L9 3.5 10.5 5 6 9.5z" fill="#fff"/></svg></div><div class="t ft" style="left:30.5px;top:4px;">app/Http/Controllers/AdminController.php</div></div></div>
</div><div id="br">
<div id="brh"><div class="fic" style="left:5px;top:7px"><svg width="14" height="14" viewBox="0 0 14 14" ><rect width="14" height="14" rx="3" fill="#ffab00"/><path d="M4 10l.5-2L9 3.5 10.5 5 6 9.5z" fill="#fff"/></svg></div><div class="t ft" style="left:25px;top:6.3px;font-size:12px;letter-spacing:-.06px"><b>app/Http/Controllers/AdminController.php</b></div>
<div class="btn" style="left:511px;top:2px;width:42px;height:23px"><div class="chv" style="left:4.600px;top:3px"><svg width="15" height="15" viewBox="0 0 15 15" ><path d="M6.35 0.59L8.65 0.59L8.99 2.73L9.82 3.07L11.57 1.80L13.20 3.43L11.93 5.18L12.27 6.01L14.41 6.35L14.41 8.65L12.27 8.99L11.93 9.82L13.20 11.57L11.57 13.20L9.82 11.93L8.99 12.27L8.65 14.41L6.35 14.41L6.01 12.27L5.18 11.93L3.43 13.20L1.80 11.57L3.07 9.82L2.73 8.99L0.59 8.65L0.59 6.35L2.73 6.01L3.07 5.18L1.80 3.43L3.43 1.80L5.18 3.07L6.01 2.73Z" fill="#6c6c6c"/><circle cx="7.5" cy="7.5" r="2.4" fill="#e1e1e1"/></svg></div><div class="chv" style="left:26px;top:8px"><svg width="9" height="6" viewBox="0 0 9 6" ><path d="M1 1l3.5 3.5L8 1" fill="none" stroke="#333" stroke-width="1"/></svg></div></div>
<div class="dots"><i></i><i></i><i></i></div>
</div>
<div id="diff">
<div id="gut"></div>
<div id="hunk"><div class="t hk" style="left:4px;top:5.5px;"><span class="cj" style="width:1em">块</span> 1<span class="cj" style="width:1em">：</span> <span class="cj" style="width:1em">行</span> 23-38</div><div class="btn" style="left:479px;top:2px;width:52px;height:22px"><div class="t bt" style="left:3px;top:2.5px;font-size:11px"><span class="cj" style="width:4em">回滚区块</span></div></div></div>
<div class="dl " style="top:27px;height:13px"><span class="n1" style="top:-0.75px">23</span><span class="n2" style="top:-0.75px">23</span><span class="sg" style="top:-0.75px"></span><span class="cd" style="top:-0.75px">     */</span></div>
<div class="dl " style="top:40px;height:13px"><span class="n1" style="top:-0.88px">24</span><span class="n2" style="top:-0.88px">24</span><span class="sg" style="top:-0.88px"></span><span class="cd" style="top:-0.88px">    <span class="k">public</span> <span class="k">function</span> index()</span></div>
<div class="dl " style="top:53px;height:13px"><span class="n1" style="top:-1.00px">25</span><span class="n2" style="top:-1.00px">25</span><span class="sg" style="top:-1.00px"></span><span class="cd" style="top:-1.00px">    {</span></div>
<div class="dl del" style="top:66px;height:13px"><span class="n1" style="top:-1.12px">26</span><span class="n2" style="top:-1.12px"></span><span class="sg" style="top:-1.12px">-</span><span class="cd" style="top:-1.12px">        <span class="k">echo</span> <span class="s">'222'</span>;</span></div>
<div class="dl del" style="top:79px;height:13px"><span class="n1" style="top:-1.25px">27</span><span class="n2" style="top:-1.25px"></span><span class="sg" style="top:-1.25px">-</span><span class="cd" style="top:-1.25px">        <span class="k">echo</span> <span class="s">'3333'</span>;</span></div>
<div class="dl add" style="top:92px;height:13px"><span class="n1" style="top:-1.38px"></span><span class="n2" style="top:-1.38px">26</span><span class="sg" style="top:-1.38px">+</span><span class="cd" style="top:-1.38px">        <span class="c">// <span class="cj" style="width:11em">商垦后处理留下原有数据</span></span></span></div>
<div class="dl add" style="top:105px;height:13px"><span class="n1" style="top:-1.50px"></span><span class="n2" style="top:-1.50px">27</span><span class="sg" style="top:-1.50px">+</span><span class="cd" style="top:-1.50px">        <span class="k">echo</span> <span class="s">'111'</span>;</span></div>
<div class="dl add" style="top:118px;height:12px"><span class="n1" style="top:-1.62px"></span><span class="n2" style="top:-1.62px">28</span><span class="sg" style="top:-1.62px">+</span><span class="cd" style="top:-1.62px">        <span class="k">echo</span> <span class="s">'eee'</span>;</span></div>
<div class="dl add" style="top:130px;height:13px"><span class="n1" style="top:-0.75px"></span><span class="n2" style="top:-0.75px">29</span><span class="sg" style="top:-0.75px">+</span><span class="cd" style="top:-0.75px">        <span class="k">echo</span> <span class="s">'firstchange++'</span>;</span></div>
<div class="dl " style="top:143px;height:13px"><span class="n1" style="top:-0.88px">28</span><span class="n2" style="top:-0.88px">30</span><span class="sg" style="top:-0.88px"></span><span class="cd" style="top:-0.88px">        <span class="k">return</span> view(<span class="s">'admin'</span>);</span></div>
<div class="dl " style="top:156px;height:13px"><span class="n1" style="top:-1.00px">29</span><span class="n2" style="top:-1.00px">31</span><span class="sg" style="top:-1.00px"></span><span class="cd" style="top:-1.00px">    }</span></div>
<div class="dl " style="top:169px;height:13px"><span class="n1" style="top:-1.12px">30</span><span class="n2" style="top:-1.12px">32</span><span class="sg" style="top:-1.12px"></span><span class="cd" style="top:-1.12px"></span></div>
<div class="dl " style="top:182px;height:13px"><span class="n1" style="top:-1.25px">31</span><span class="n2" style="top:-1.25px">33</span><span class="sg" style="top:-1.25px"></span><span class="cd" style="top:-1.25px">    <span class="k">public</span> <span class="k">function</span> index2()</span></div>
<div class="dl " style="top:195px;height:13px"><span class="n1" style="top:-1.38px">32</span><span class="n2" style="top:-1.38px">34</span><span class="sg" style="top:-1.38px"></span><span class="cd" style="top:-1.38px">    {</span></div>
<div class="dl add" style="top:208px;height:13px"><span class="n1" style="top:-1.50px"></span><span class="n2" style="top:-1.50px">35</span><span class="sg" style="top:-1.50px">+</span><span class="cd" style="top:-1.50px">        <span class="c">// <span class="cj" style="width:8em">测试后留下新数据</span></span></span></div>
<div class="dl " style="top:221px;height:12px"><span class="n1" style="top:-1.62px">33</span><span class="n2" style="top:-1.62px">36</span><span class="sg" style="top:-1.62px"></span><span class="cd" style="top:-1.62px">        <span class="k">echo</span> <span class="s">'test1'</span>;</span></div>
<div class="dl " style="top:233px;height:13px"><span class="n1" style="top:-0.75px">34</span><span class="n2" style="top:-0.75px">37</span><span class="sg" style="top:-0.75px"></span><span class="cd" style="top:-0.75px">    }</span></div>
<div class="dl " style="top:246px;height:13px"><span class="n1" style="top:-0.88px">35</span><span class="n2" style="top:-0.88px">38</span><span class="sg" style="top:-0.88px"></span><span class="cd" style="top:-0.88px">}</span></div>
<div style="position:absolute;left:0;top:26px;width:63px;height:1px;background:#dcdcdc"></div>
</div>
<div class="vsb" style="right:1px;top:0;height:307px"><div style="position:absolute;left:0;top:0"><svg width="17" height="17" viewBox="0 0 17 17" ><path d="M5 10l3.5-3.5L12 10" fill="none" stroke="#505050" stroke-width="1.2"/></svg></div><div class="thumb" style="top:17px;height:265px"></div><div style="position:absolute;left:0;bottom:0"><svg width="17" height="17" viewBox="0 0 17 17" ><path d="M5 7l3.5 3.5L12 7" fill="none" stroke="#505050" stroke-width="1.2"/></svg></div></div>
</div>
<div id="edgeL"></div><div id="edgeR"></div><div id="edgeT"></div><div id="edgeB"></div>
</div></body></html>
